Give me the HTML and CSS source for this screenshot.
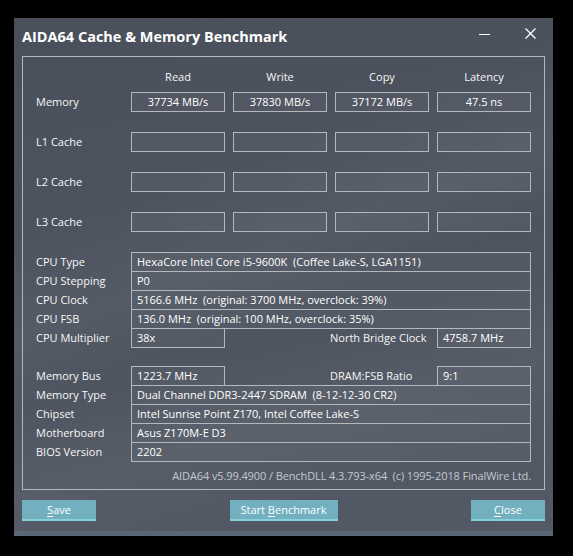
FILE: index.html
```html
<!DOCTYPE html>
<html>
<head>
<meta charset="utf-8">
<link rel="stylesheet" href="styles.css">
</head>
<body>
<div class="window">
  <div class="titlebar">
    <div class="title">AIDA64 Cache &amp; Memory Benchmark</div>
    <div class="controls">
      <span class="min"></span>
      <svg class="close-x" width="11" height="11" viewBox="0 0 11 11"><path d="M0.5 0.5 L10.5 10.5 M10.5 0.5 L0.5 10.5" stroke="#ffffff" stroke-width="1.3" fill="none"/></svg>
    </div>
  </div>
  <div class="group">
    <div class="bench-head">
      <div></div>
      <div class="hdr">Read</div>
      <div class="hdr">Write</div>
      <div class="hdr">Copy</div>
      <div class="hdr">Latency</div>
    </div>
    <div class="bench">
      <div class="lbl">Memory</div>
      <div class="box">37734 MB/s</div>
      <div class="box">37830 MB/s</div>
      <div class="box">37172 MB/s</div>
      <div class="box">47.5 ns</div>

      <div class="lbl">L1 Cache</div>
      <div class="box"></div>
      <div class="box"></div>
      <div class="box"></div>
      <div class="box"></div>

      <div class="lbl">L2 Cache</div>
      <div class="box"></div>
      <div class="box"></div>
      <div class="box"></div>
      <div class="box"></div>

      <div class="lbl">L3 Cache</div>
      <div class="box"></div>
      <div class="box"></div>
      <div class="box"></div>
      <div class="box"></div>
    </div>

    <div class="info first">
      <div class="row"><div class="lbl">CPU Type</div><div class="val wide">HexaCore Intel Core i5-9600K&nbsp; (Coffee Lake-S, LGA1151)</div></div>
      <div class="row"><div class="lbl">CPU Stepping</div><div class="val wide">P0</div></div>
      <div class="row"><div class="lbl">CPU Clock</div><div class="val wide">5166.6 MHz&nbsp; (original: 3700 MHz, overclock: 39%)</div></div>
      <div class="row"><div class="lbl">CPU FSB</div><div class="val wide">136.0 MHz&nbsp; (original: 100 MHz, overclock: 35%)</div></div>
      <div class="row"><div class="lbl">CPU Multiplier</div><div class="val small">38x</div><div class="lbl2">North Bridge Clock</div><div class="val small">4758.7 MHz</div></div>
    </div>

    <div class="info second">
      <div class="row"><div class="lbl">Memory Bus</div><div class="val small">1223.7 MHz</div><div class="lbl2">DRAM:FSB Ratio</div><div class="val small">9:1</div></div>
      <div class="row"><div class="lbl">Memory Type</div><div class="val wide">Dual Channel DDR3-2447 SDRAM&nbsp; (8-12-12-30 CR2)</div></div>
      <div class="row"><div class="lbl">Chipset</div><div class="val wide">Intel Sunrise Point Z170, Intel Coffee Lake-S</div></div>
      <div class="row"><div class="lbl">Motherboard</div><div class="val wide">Asus Z170M-E D3</div></div>
      <div class="row"><div class="lbl">BIOS Version</div><div class="val wide">2202</div></div>
    </div>

    <div class="footer">AIDA64 v5.99.4900 / BenchDLL 4.3.793-x64&nbsp; (c) 1995-2018 FinalWire Ltd.</div>
  </div>
  <div class="buttons">
    <div class="btn btn-side"><u>S</u>ave</div>
    <div class="btn btn-mid">Start <u>B</u>enchmark</div>
    <div class="btn btn-side"><u>C</u>lose</div>
  </div>
  <div class="strip"></div>
</div>
</body>
</html>
```

FILE: styles.css
```css
* { box-sizing: border-box; }
html, body { margin: 0; padding: 0; }
body {
  background: #000;
  width: 573px;
  height: 556px;
  padding: 18px 0 0 14px;
  font-family: "Open Sans", "Noto Sans", sans-serif;
  font-size: 11px;
  color: #f6f6f6;
}
.window {
  width: 539px;
  height: 518px;
  background:
    linear-gradient(160deg, rgba(255,255,255,0) 30%, rgba(255,255,255,0.04) 45%, rgba(255,255,255,0) 55%),
    linear-gradient(165deg, rgba(255,255,255,0) 60%, rgba(255,255,255,0.035) 72%, rgba(255,255,255,0) 85%),
    linear-gradient(170deg, #4a505b 0%, #4d5460 50%, #535a66 100%);
  display: flex;
  flex-direction: column;
}
.titlebar {
  height: 38px;
  display: flex;
  align-items: center;
  justify-content: space-between;
  padding: 0 0 0 8px;
}
.title {
  font-family: "Open Sans", sans-serif;
  font-weight: bold;
  font-size: 14.5px;
  color: #ffffff;
  margin-top: -2px;
}
.controls {
  display: flex;
  align-items: center;
  height: 100%;
}
.min {
  width: 11px;
  height: 1px;
  background: #ffffff;
  margin-right: 35px;
  margin-top: -5px;
}
.close-x {
  margin-right: 17px;
  margin-top: -8px;
}
.group {
  margin: 0 8px;
  height: 434px;
  border: 1px solid #b4b8bd;
  padding: 12px 13px 0 13px;
}
.bench-head,
.bench {
  display: grid;
  grid-template-columns: 87px 94px 94px 94px 94px;
  column-gap: 8px;
}
.bench-head {
  height: 16px;
  margin-bottom: 7px;
}
.hdr {
  text-align: center;
  line-height: 16px;
}
.bench {
  grid-auto-rows: 20px;
  row-gap: 20px;
}
.bench .lbl { line-height: 20px; }
.box {
  border: 1px solid #b4b8bd;
  height: 20px;
  line-height: 18px;
  text-align: center;
  background: rgba(255,255,255,0.04);
  color: #ffffff;
}
.info { display: flex; flex-direction: column; }
.info.first { margin-top: 20px; }
.info.second { margin-top: 19px; }
.row {
  display: flex;
  height: 20px;
  margin-bottom: -1px;
}
.row .lbl {
  width: 95px;
  line-height: 20px;
}
.val {
  border: 1px solid #b4b8bd;
  height: 20px;
  line-height: 18px;
  padding-left: 5px;
  color: #ffffff;
  background: rgba(255,255,255,0.03);
}
.val.wide { width: 400px; }
.val.small { width: 94px; }
.lbl2 {
  width: 212px;
  padding-left: 105px;
  line-height: 20px;
}
.footer {
  margin-top: 5px;
  text-align: right;
  color: #c4c8cd;
  line-height: 20px;
  letter-spacing: -0.1px;
}
.buttons {
  display: flex;
  justify-content: space-between;
  margin: 10px 8px 0 8px;
}
.btn {
  height: 21px;
  background: #72afbf;
  border-bottom: 2px solid #84d2da;
  color: #ffffff;
  text-align: center;
  line-height: 20px;
}
.btn u { text-underline-offset: 2px; }
.btn-side { width: 74px; }
.btn-mid { width: 108px; }
.strip {
  margin-top: 10px;
  height: 5px;
  background: #5b6777;
}
```
